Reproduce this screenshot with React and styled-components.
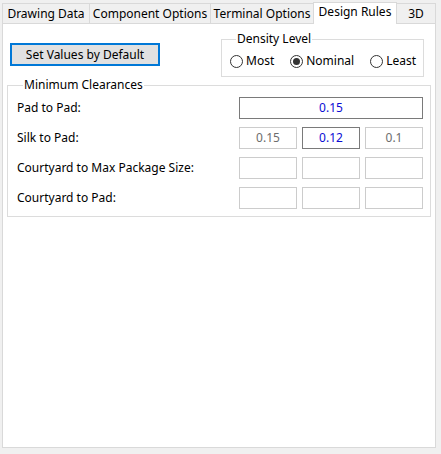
import React from "react";
import styled, { createGlobalStyle } from "styled-components";

const GlobalStyle = createGlobalStyle`
  html, body {
    margin: 0;
    padding: 0;
    background: #f0f0f0;
  }
  body {
    font-family: "Noto Sans", "Liberation Sans", sans-serif;
    font-size: 12px;
    color: #000;
  }
`;

const Window = styled.div`
  width: 441px;
  height: 454px;
  background: #f0f0f0;
  box-sizing: border-box;
  padding: 0 5px 0 2px;
  display: flex;
  flex-direction: column;
`;

const TabBar = styled.div`
  display: flex;
  align-items: flex-end;
  height: 24px;
  margin-bottom: -1px;
  position: relative;
  z-index: 1;
`;

const Tab = styled.div`
  box-sizing: border-box;
  width: ${(p) => p.$width}px;
  height: ${(p) => (p.$active ? 22 : 20)}px;
  margin-bottom: ${(p) => (p.$active ? 0 : 1)}px;
  margin-left: ${(p) => (p.$first ? 0 : -1)}px;
  border: 1px solid #d9d9d9;
  border-bottom: none;
  background: ${(p) => (p.$active ? "#fff" : "#f0f0f0")};
  position: relative;
  z-index: ${(p) => (p.$active ? 2 : 1)};
  display: flex;
  justify-content: center;
  padding-top: ${(p) => (p.$active ? 2 : 3)}px;
  line-height: 14px;
  white-space: nowrap;
`;

const Panel = styled.div`
  box-sizing: border-box;
  height: 425px;
  border: 1px solid #d9d9d9;
  background: #fff;
  padding: 7px 4px 0 4px;
`;

const TopRow = styled.div`
  display: flex;
  justify-content: space-between;
  align-items: flex-start;
  padding: 0 7px 0 3px;
`;

const DefaultButton = styled.button`
  box-sizing: border-box;
  width: 150px;
  height: 23px;
  margin-top: 12px;
  border: 2px solid #0078d7;
  background: #e1e1e1;
  font: inherit;
  color: #000;
  padding: 0;
  line-height: 17px;
`;

const Group = styled.fieldset`
  box-sizing: border-box;
  margin: 0;
  border: 1px solid #dcdcdc;
  min-width: 0;
  width: ${(p) => p.$width}px;
  padding: ${(p) => p.$pad};
`;

const Legend = styled.legend`
  padding: 0 1px;
  margin-left: 6px;
  line-height: 16px;
`;

const RadioRow = styled.div`
  display: flex;
  gap: 16px;
  align-items: center;
  height: 16px;
`;

const RadioItem = styled.label`
  display: flex;
  align-items: center;
  gap: 3px;
  line-height: 16px;
`;

const RadioCircle = styled.span`
  box-sizing: border-box;
  width: 13px;
  height: 13px;
  border-radius: 50%;
  border: 1px solid #333;
  background: #fff;
  display: flex;
  align-items: center;
  justify-content: center;

  &::after {
    content: "";
    width: 7px;
    height: 7px;
    border-radius: 50%;
    background: ${(p) => (p.$checked ? "#333" : "transparent")};
  }
`;

const ClearanceGrid = styled.div`
  display: grid;
  grid-template-columns: 1fr 58px 58px 58px;
  column-gap: 5px;
  row-gap: 8px;
  align-items: center;
`;

const RowLabel = styled.div`
  line-height: 16px;
`;

const Field = styled.div`
  box-sizing: border-box;
  height: 22px;
  grid-column: ${(p) => (p.$wide ? "span 3" : "auto")};
  border: 1px solid ${(p) => (p.$active ? "#7a7a7a" : "#cccccc")};
  background: #fff;
  color: ${(p) => (p.$active ? "#0c0cd4" : "#6d6d6d")};
  display: flex;
  align-items: center;
  justify-content: center;
  line-height: 16px;
`;

const tabs = [
  { label: "Drawing Data", width: 88 },
  { label: "Component Options", width: 122 },
  { label: "Terminal Options", width: 104 },
  { label: "Design Rules", width: 84, active: true },
  { label: "3D", width: 40 },
];

const densities = [
  { label: "Most" },
  { label: "Nominal", checked: true },
  { label: "Least" },
];

const Radio = ({ label, checked }) => (
  <RadioItem>
    <RadioCircle $checked={checked} />
    {label}
  </RadioItem>
);

const App = () => {
  return (
    <>
      <GlobalStyle />
      <Window>
        <TabBar>
          {tabs.map((t, i) => (
            <Tab key={t.label} $width={t.width} $active={t.active} $first={i === 0}>
              {t.label}
            </Tab>
          ))}
        </TabBar>
        <Panel>
          <TopRow>
            <DefaultButton>Set Values by Default</DefaultButton>
            <Group $width={203} $pad="6px 8px 7px 8px">
              <Legend>Density Level</Legend>
              <RadioRow>
                {densities.map((d) => (
                  <Radio key={d.label} {...d} />
                ))}
              </RadioRow>
            </Group>
          </TopRow>
          <Group $width={424} $pad="4px 7px 7px 9px">
            <Legend>Minimum Clearances</Legend>
            <ClearanceGrid>
              <RowLabel>Pad to Pad:</RowLabel>
              <Field $wide $active>0.15</Field>

              <RowLabel>Silk to Pad:</RowLabel>
              <Field>0.15</Field>
              <Field $active>0.12</Field>
              <Field>0.1</Field>

              <RowLabel>Courtyard to Max Package Size:</RowLabel>
              <Field />
              <Field />
              <Field />

              <RowLabel>Courtyard to Pad:</RowLabel>
              <Field />
              <Field />
              <Field />
            </ClearanceGrid>
          </Group>
        </Panel>
      </Window>
    </>
  );
};

export default App;
